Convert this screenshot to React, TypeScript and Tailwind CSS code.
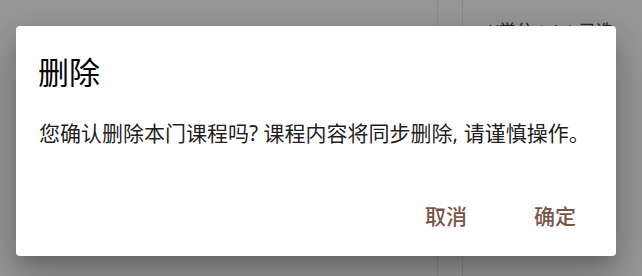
export default function App() {
  const font = { fontFamily: '"Noto Sans", "Noto Sans CJK SC", sans-serif' };
  return (
    <div className="relative w-[642px] h-[276px] overflow-hidden bg-white" style={font}>
      {/* page behind the dialog */}
      <div className="flex h-full">
        <div className="w-[438px] border-r border-gray-200" />
        <div className="w-[25px] border-r border-gray-200" />
        <div className="flex-1 pt-[18px] pl-[26px] text-[17px] text-gray-700 whitespace-nowrap">
          ¥学分 <span className="text-gray-400">|</span> 1 <span className="text-sky-600">|</span> 已选
        </div>
      </div>

      {/* overlay */}
      <div className="absolute inset-0 bg-black/40 flex items-start justify-start pl-[16px] pt-[26px]">
        <div className="w-[600px] h-[230px] bg-white rounded-[4px] shadow-[0_11px_15px_-7px_rgba(0,0,0,0.2),0_24px_38px_3px_rgba(0,0,0,0.14),0_9px_46px_8px_rgba(0,0,0,0.12)] flex flex-col">
          <div className="pl-[22px] pt-[26px] text-[31px] leading-[40px] text-black">删除</div>
          <div className="pl-[23px] pt-[26px] text-[21px] leading-[30px] text-black/90 whitespace-nowrap">
            您确认删除本门课程吗? 课程内容将同步删除, 请谨慎操作。
          </div>
          <div className="mt-auto flex justify-end gap-[23px] pr-[18px] pb-[19px]">
            <button className="px-[22px] h-[40px] text-[21px] text-[#795548] font-medium">取消</button>
            <button className="px-[22px] h-[40px] text-[21px] text-[#795548] font-medium">确定</button>
          </div>
        </div>
      </div>
    </div>
  );
}
